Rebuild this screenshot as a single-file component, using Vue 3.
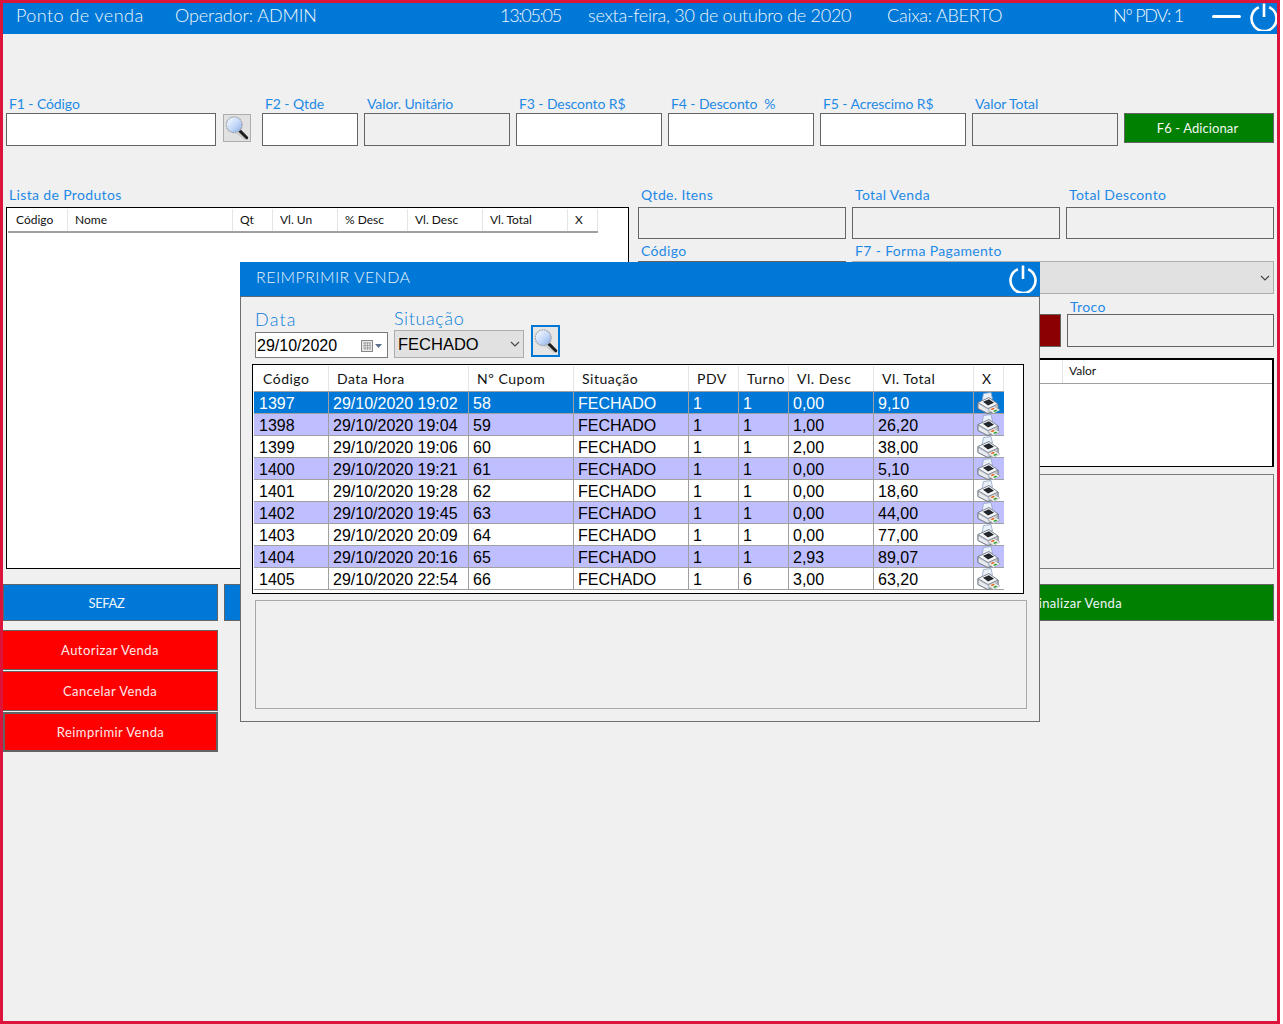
<script setup>
const topFields = [
  { label: 'F2 - Qtde', w: 96 },
  { label: 'Valor. Unitário', w: 146, off: true },
  { label: 'F3 - Desconto R$', w: 146 },
  { label: 'F4 - Desconto  %', w: 146 },
  { label: 'F5 - Acrescimo R$', w: 146 },
  { label: 'Valor Total', w: 146, off: true },
]

const productCols = [
  { name: 'Código', w: 60 },
  { name: 'Nome', w: 165 },
  { name: 'Qt', w: 40 },
  { name: 'Vl. Un', w: 65 },
  { name: '% Desc', w: 70 },
  { name: 'Vl. Desc', w: 75 },
  { name: 'Vl. Total', w: 85 },
  { name: 'X', w: 30 },
]

const saleCols = [
  { name: 'Código', w: 75 },
  { name: 'Data Hora', w: 140 },
  { name: 'Nº Cupom', w: 105 },
  { name: 'Situação', w: 115 },
  { name: 'PDV', w: 50 },
  { name: 'Turno', w: 50 },
  { name: 'Vl. Desc', w: 85 },
  { name: 'Vl. Total', w: 100 },
  { name: 'X', w: 30 },
]

const sales = [
  ['1397', '29/10/2020 19:02', '58', 'FECHADO', '1', '1', '0,00', '9,10'],
  ['1398', '29/10/2020 19:04', '59', 'FECHADO', '1', '1', '1,00', '26,20'],
  ['1399', '29/10/2020 19:06', '60', 'FECHADO', '1', '1', '2,00', '38,00'],
  ['1400', '29/10/2020 19:21', '61', 'FECHADO', '1', '1', '0,00', '5,10'],
  ['1401', '29/10/2020 19:28', '62', 'FECHADO', '1', '1', '0,00', '18,60'],
  ['1402', '29/10/2020 19:45', '63', 'FECHADO', '1', '1', '0,00', '44,00'],
  ['1403', '29/10/2020 20:09', '64', 'FECHADO', '1', '1', '0,00', '77,00'],
  ['1404', '29/10/2020 20:16', '65', 'FECHADO', '1', '1', '2,93', '89,07'],
  ['1405', '29/10/2020 22:54', '66', 'FECHADO', '1', '6', '3,00', '63,20'],
]

const sideButtons = ['Autorizar Venda', 'Cancelar Venda', 'Reimprimir Venda']
</script>

<template>
  <div class="screen">
    <header class="topbar">
      <span class="t-name">Ponto de venda</span>
      <span class="t-op">Operador: ADMIN</span>
      <span class="t-time">13:05:05</span>
      <span class="t-date">sexta-feira, 30 de outubro de 2020</span>
      <span class="t-caixa">Caixa: ABERTO</span>
      <span class="t-pdv">Nº PDV: 1</span>
      <span class="t-min"></span>
      <svg class="t-power" viewBox="0 0 28 28" width="28" height="28">
        <use href="#power" />
      </svg>
    </header>

    <section class="fields">
      <label class="field code">
        <span class="lbl">F1 - Código</span>
        <span class="box"></span>
      </label>
      <button class="search" type="button">
        <svg viewBox="0 0 28 28" width="26" height="26">
          <use href="#lens" />
        </svg>
      </button>
      <label
        v-for="f in topFields"
        :key="f.label"
        class="field"
        :style="{ width: f.w + 'px' }">
        <span class="lbl">{{ f.label }}</span>
        <span class="box" :class="{ off: f.off }"></span>
      </label>
      <button class="add" type="button">F6 - Adicionar</button>
    </section>

    <section class="middle">
      <div class="products">
        <span class="lbl">Lista de Produtos</span>
        <div class="prod-table">
          <div class="prod-head">
            <span v-for="c in productCols" :key="c.name" :style="{ width: c.w + 'px' }">{{ c.name }}</span>
          </div>
        </div>
      </div>

      <div class="totals">
        <label class="field"><span class="lbl">Qtde. Itens</span><span class="box off tall"></span></label>
        <label class="field"><span class="lbl">Total Venda</span><span class="box off tall"></span></label>
        <label class="field"><span class="lbl">Total Desconto</span><span class="box off tall"></span></label>

        <label class="field"><span class="lbl">Código</span><span class="box"></span></label>
        <label class="field wide">
          <span class="lbl">F7 - Forma Pagamento</span>
          <span class="pay-select">
            <svg viewBox="0 0 10 6" width="10" height="6"><path d="M1 1l4 4 4-4" fill="none" stroke="#444" stroke-width="1.1" /></svg>
          </span>
        </label>

        <label class="field"><span class="lbl">&nbsp;</span><span class="box off"></span></label>
        <div class="field dark-cell"><span class="lbl">&nbsp;</span><span class="dark-btn"></span></div>
        <label class="field troco"><span class="lbl">Troco</span><span class="box off"></span></label>

        <div class="pay-table">
          <div class="pay-head"><span class="pay-left"></span><span class="pay-val">Valor</span></div>
        </div>
        <div class="notes"></div>
      </div>
    </section>

    <section class="actions">
      <button class="act blue sefaz" type="button">SEFAZ</button>
      <button class="act blue fill" type="button"></button>
      <button class="act green finish" type="button">Finalizar Venda</button>
    </section>

    <section class="side">
      <button
        v-for="(b, i) in sideButtons"
        :key="b"
        class="red"
        :class="{ focused: i === 2 }"
        type="button">{{ b }}</button>
    </section>

    <div class="modal">
      <div class="modal-head">
        <span>REIMPRIMIR VENDA</span>
        <svg viewBox="0 0 28 28" width="28" height="28">
          <use href="#power" />
        </svg>
      </div>
      <div class="modal-body">
        <div class="filter">
          <label class="f-data">
            <span class="f-lbl">Data</span>
            <span class="date-box">
              <span>29/10/2020</span>
              <svg viewBox="0 0 22 14" width="22" height="14">
                <rect x="0.5" y="1.5" width="11" height="11" fill="#e8e8e8" stroke="#888" />
                <path d="M2 4h8M2 6.5h8M2 9h8M4 3v8M6.5 3v8M9 3v8" stroke="#999" stroke-width=".8" />
                <path d="M14 5h7l-3.5 4z" fill="#5c6f8c" />
              </svg>
            </span>
          </label>
          <label class="f-sit">
            <span class="f-lbl">Situação</span>
            <span class="sit-box">
              <span>FECHADO</span>
              <svg viewBox="0 0 10 6" width="10" height="6"><path d="M1 1l4 4 4-4" fill="none" stroke="#444" stroke-width="1.1" /></svg>
            </span>
          </label>
          <button class="m-search" type="button">
            <svg viewBox="0 0 28 28" width="26" height="28">
              <use href="#lens" />
            </svg>
          </button>
        </div>

        <div class="grid">
          <div class="g-head">
            <span v-for="c in saleCols" :key="c.name" :style="{ width: c.w + 'px' }">{{ c.name }}</span>
          </div>
          <div
            v-for="(row, i) in sales"
            :key="row[0]"
            class="g-row"
            :class="{ sel: i === 0, alt: i % 2 === 1 }">
            <span
              v-for="(v, j) in row"
              :key="j"
              :style="{ width: saleCols[j].w + 'px' }">{{ v }}</span>
            <span class="g-print" :style="{ width: saleCols[8].w + 'px' }">
              <svg viewBox="0 0 24 22" width="24" height="22">
                <use href="#printer" />
              </svg>
            </span>
          </div>
        </div>

        <div class="m-notes"></div>
      </div>
    </div>

    <svg width="0" height="0" class="defs">
      <defs>
        <linearGradient id="glass" x1="0" y1="0" x2="1" y2="1">
          <stop offset="0" stop-color="#fbfdff" />
          <stop offset=".55" stop-color="#c4d8f8" />
          <stop offset="1" stop-color="#86a9e6" />
        </linearGradient>
        <g id="power">
          <path d="M8.800 4.200a12.500 12.500 0 1 0 10.400 0" fill="none" stroke="#fff" stroke-width="2.600" />
          <path d="M14 .500v13.500" stroke="#fff" stroke-width="2.600" />
        </g>
        <g id="lens">
          <path d="M13 20l9 7 5-1-9-9z" fill="#bdbdbd" opacity=".55" />
          <path d="M16 16l8.500 8.500" stroke="#1d1d1d" stroke-width="3.200" stroke-linecap="round" />
          <circle cx="11" cy="10.500" r="8.500" fill="url(#glass)" stroke="#a2a6ad" stroke-width="1.300" stroke-dasharray="2 .7" />
        </g>
        <g id="printer">
          <path d="M6 9 7.500 1.500 15 .500 16.500 7z" fill="#eaf1fb" stroke="#8ea3c4" stroke-width=".8" />
          <path d="M2 10.500 13 5.500l9 6.500v5l-10 4.500-10-5z" fill="#f5f6f8" stroke="#6f7784" stroke-width=".9" />
          <path d="M2 10.500l10 6 10-4.500v5l-10 4.500-10-5z" fill="#c5cad3" stroke="#6f7784" stroke-width=".8" />
          <path d="M2.800 12.500l9 5.300v3l-9-4.500z" fill="#e9ebef" />
          <path d="M7 9.800 13 7.200l5 3.600-6 2.800z" fill="#23272e" />
          <path d="M12 17.500l6-3 6 3.500-6.500 3.500z" fill="#f7f7f7" stroke="#8a9099" stroke-width=".5" />
          <path d="M14.500 17.300l3-1.500 1.500 1-3 1.500z" fill="#e2651f" />
          <path d="M17 19l3-1.500 1.500 1-3 1.500z" fill="#2f9e37" />
        </g>
      </defs>
    </svg>
  </div>
</template>

<style>
html, body { margin: 0; background: #fff; }
</style>

<style scoped>
.screen { box-sizing: border-box; position: relative; width: 1280px; height: 1024px; border: 3px solid #dc143c; background: #f0f0f0; font-family: Lato, "Open Sans", sans-serif; overflow: hidden; }
.defs { position: absolute; }

.topbar { box-sizing: border-box; height: 31px; display: grid; grid-template-columns: 159px 325px 88px 299px 226px 99px 38px 28px; padding-left: 13px; align-items: start; background: #0078d7; color: #f2f8fd; font-size: 18px; font-weight: 300; line-height: 25px; white-space: nowrap; }
.t-name { letter-spacing: .45px; }
.t-op { letter-spacing: -.1px; }
.t-time { letter-spacing: -1.3px; }
.t-date { letter-spacing: -.27px; }
.t-caixa { letter-spacing: -.25px; }
.t-pdv { letter-spacing: -1.2px; }
.t-min { width: 29px; height: 3px; margin-top: 12px; border-radius: 2px; background: #fff; }

.lbl { display: block; height: 16px; color: #1f8ae6; font-size: 14px; line-height: 16px; letter-spacing: .35px; white-space: pre; }
.field { display: block; }
.box { display: block; box-sizing: border-box; height: 33px; border: 1px solid #646464; background: #fff; }
.box.off { background: #f0f0f0; }
.box.tall { height: 32px; }

.fields { display: flex; gap: 6px; padding: 63px 0 0 3px; align-items: flex-start; }
.fields .lbl { padding-left: 3px; line-height: 14px; letter-spacing: -.1px; }
.code { width: 210px; }
.search { box-sizing: border-box; width: 28px; height: 28px; margin: 17px 5px 0 1px; padding: 0; border: 1px solid #adadad; background: #e1e1e1; display: grid; place-items: center; }
.add { box-sizing: border-box; width: 150px; height: 30px; margin-top: 16px; padding-right: 9px; border: 1px solid #646464; background: #008000; color: #f3f8f3; font: 13px Lato, sans-serif; letter-spacing: .1px; }

.middle { display: grid; grid-template-columns: 623px 636px; column-gap: 9px; margin-top: 41px; padding-left: 3px; }
.products .lbl { padding-left: 3px; height: 20px; }
.prod-table { box-sizing: border-box; height: 362px; border: 1px solid #000; padding: 1px; background: #fff; }
.prod-head { display: flex; width: 590px; height: 22px; border-bottom: 2px solid #a0a0a0; }
.prod-head span { box-sizing: border-box; padding-left: 7px; border-right: 1px solid #e4e4e4; color: #111; font-size: 12px; line-height: 22px; white-space: nowrap; }
.prod-head span:first-child { padding-left: 8px; }

.totals { display: grid; grid-template-columns: 208px 208px 208px; column-gap: 6px; align-content: start; }
.totals .lbl { height: 20px; padding-left: 3px; }
.totals > .field:nth-child(n+4) .lbl { height: 22px; line-height: 24px; }
.totals > .field:nth-child(n+6) .lbl { height: 20px; line-height: 26px; }
.wide { grid-column: span 2; }
.pay-select { box-sizing: border-box; display: flex; align-items: center; justify-content: flex-end; height: 33px; padding-right: 3px; border: 1px solid #adadad; background: #e1e1e1; }
.dark-cell { margin-right: -1px; }
.troco { margin-left: 1px; }
.dark-btn { display: block; box-sizing: border-box; height: 33px; border: 1px solid #646464; background: #8b0000; }
.pay-table { grid-column: 1 / -1; box-sizing: border-box; height: 109px; margin-top: 11px; border: 1px solid #000; border-width: 2px 2px 1px 1px; background: #fff; }
.pay-head { display: flex; height: 23px; border-bottom: 1px solid #a0a0a0; }
.pay-left { width: 423px; border-right: 1px solid #e4e4e4; }
.pay-val { padding-left: 6px; color: #111; font-size: 12px; line-height: 22px; }
.notes { grid-column: 1 / -1; box-sizing: border-box; height: 95px; margin-top: 7px; border: 1px solid #7a7a7a; background: #efefef; }

.actions { display: flex; gap: 6px; margin-top: 15px; }
.act { box-sizing: border-box; height: 37px; border: 1px solid #646464; color: #eef6fc; font: 13px Lato, sans-serif; letter-spacing: .35px; }
.blue { background: #0078d7; }
.green { background: #008000; }
.sefaz { width: 215px; padding: 0 8px 0 0; letter-spacing: -.4px; }
.fill { width: 646px; }
.finish { width: 398px; padding-left: 9px; }

.side { display: flex; flex-direction: column; gap: 1px; width: 215px; margin-top: 9px; }
.red { box-sizing: border-box; height: 40px; padding-bottom: 2px; border: 1px solid #646464; border-left: 0; background: #f00; color: #ffe9e9; font: 13px Lato, sans-serif; letter-spacing: .45px; }
.red.focused { border: 2px solid #646464; }

.modal { box-sizing: border-box; position: absolute; left: 237px; top: 259px; width: 800px; height: 460px; border: 1px solid #6e6e6e; border-top: 0; background: #f0f0f0; }
.modal-head { display: flex; align-items: center; justify-content: space-between; box-sizing: border-box; height: 35px; margin: 0 -1px; padding: 0 3px 0 16px; border-bottom: 1px solid #5a6a78; background: #0078d7; color: #e8f2fb; font-size: 16px; font-weight: 300; letter-spacing: .45px; }
.modal-head span { margin-bottom: 6px; }
.modal-body { padding: 12px 0 0 11px; }

.filter { display: flex; align-items: flex-end; gap: 6px; height: 49px; }
.f-lbl { display: block; margin-bottom: 1px; color: #0a7ddb; font-size: 18px; font-weight: 300; line-height: 21px; letter-spacing: .6px; }
.date-box { box-sizing: border-box; display: flex; align-items: center; justify-content: space-between; width: 133px; height: 26px; padding: 1px 4px 0 1px; margin-left: 3px; border: 1px solid #7a7a7a; background: #fff; color: #000; font: 16px "Liberation Sans", sans-serif; }
.f-data .f-lbl { margin: 0 0 2px 3px; letter-spacing: 1.2px; }
.sit-box { box-sizing: border-box; display: flex; align-items: center; justify-content: space-between; width: 130px; height: 28px; padding: 0 3px 0 3px; border: 1px solid #adadad; background: #e1e1e1; color: #000; font: 16.500px "Liberation Sans", sans-serif; }
.m-search { box-sizing: border-box; width: 29px; height: 32px; margin: 0 0 1px 1px; padding: 0; border: 2px solid #0078d7; background: #e5e5e5; display: grid; place-items: center; }

.grid { box-sizing: border-box; width: 772px; height: 230px; margin-top: 6px; border: 1px solid #000; padding: 1px 0 0 1px; background: #fff; }
.g-head { box-sizing: border-box; display: flex; width: 750px; height: 26px; border-bottom: 1px solid #a0a0a0; }
.g-head span { box-sizing: border-box; padding-left: 8px; border-right: 1px solid #e4e4e4; color: #111; font-size: 14px; line-height: 26px; letter-spacing: .5px; white-space: nowrap; }
.g-head span:first-child { padding-left: 9px; }
.g-row { display: flex; width: 750px; height: 22px; box-sizing: border-box; border-bottom: 1px solid #a0a0a0; background: #fff; color: #000; font: 16px/23px "Liberation Sans", sans-serif; }
.g-row.alt { background: #bfbfff; }
.g-row.sel { background: #0078d7; color: #fff; }
.g-row span { box-sizing: border-box; padding-left: 4px; border-right: 1px solid #a0a0a0; white-space: nowrap; }
.g-row span:first-child { padding-left: 5px; }
.g-row .g-print { padding: 0 0 0 2px; border-right: 0; line-height: 0; }

.m-notes { box-sizing: border-box; width: 772px; height: 109px; margin: 6px 0 0 3px; border: 1px solid #a8a8a8; background: #f0f0f0; }
</style>
